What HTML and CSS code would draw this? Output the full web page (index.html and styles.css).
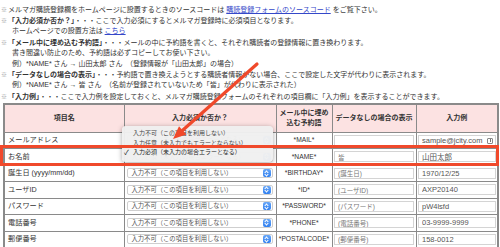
FILE: index.html
```html
<!DOCTYPE html>
<html lang="ja">
<head>
    <meta charset="UTF-8">
    <title>入力項目の設定</title>
    <link rel="stylesheet" href="styles.css">
</head>
<body>
    <div class="notes">
        <p class="note"><span class="mark">※</span>メルマガ購読登録欄をホームページに設置するときのソースコードは <a href="#">購読登録フォームのソースコード</a> をご覧下さい。</p>
        <p class="note"><span class="mark">※</span><b>「入力必須か否か？」</b>・・・ここで入力必須にするとメルマガ登録時に必須項目となります。</p>
        <p class="sub">ホームページでの設置方法は <a href="#">こちら</a></p>
        <p class="note"><span class="mark">※</span><b>「メール中に埋め込む予約語」</b>・・・メールの中に予約語を書くと、それぞれ購読者の登録情報に置き換わります。</p>
        <p class="sub">書き間違い防止のため、予約語は必ずコピーしてお使い下さい。</p>
        <p class="sub">例）*NAME* さん → 山田太郎 さん　（登録情報が「山田太郎」の場合）</p>
        <p class="note"><span class="mark">※</span><b>「データなしの場合の表示」</b>・・・予約語で置き換えようとする購読者情報がない場合、ここで設定した文字が代わりに表示されます。</p>
        <p class="sub">例）*NAME* さん → 皆 さん　（名前が登録されていないため「皆」が代わりに表示された）</p>
        <p class="note"><span class="mark">※</span><b>「入力例」</b>・・・ここで入力例を設定しておくと、メルマガ購読登録フォームのそれぞれの項目欄に「入力例」を表示することができます。</p>
    </div>

    <table class="fields">
        <colgroup>
            <col class="c-name">
            <col class="c-req">
            <col class="c-tag">
            <col class="c-empty">
            <col class="c-sample">
        </colgroup>
        <tr>
            <th>項目名</th>
            <th>入力必須か否か？</th>
            <th>メール中に埋め込む予約語</th>
            <th>データなしの場合の表示</th>
            <th>入力例</th>
        </tr>
        <tr>
            <td class="label">メールアドレス</td>
            <td><div class="select"><span>入力必須（未入力の場合エラーとなる）</span><span class="stepper"></span></div></td>
            <td class="tag">*MAIL*</td>
            <td><input class="empty" type="text" value=""></td>
            <td class="has-key"><input class="sample" type="text" value="sample@jcity.com"><span class="key"></span></td>
        </tr>
        <tr>
            <td class="label">お名前</td>
            <td><div class="select"><span>入力必須（未入力の場合エラーとなる）</span><span class="stepper"></span></div></td>
            <td class="tag">*NAME*</td>
            <td><input class="empty" type="text" value="皆"></td>
            <td><input class="sample" type="text" value="山田太郎"></td>
        </tr>
        <tr>
            <td class="label">誕生日 (yyyy/mm/dd)</td>
            <td><div class="select"><span>入力不可（この項目を利用しない）</span><span class="stepper"></span></div></td>
            <td class="tag">*BIRTHDAY*</td>
            <td><input class="empty" type="text" value="(誕生日)"></td>
            <td><input class="sample" type="text" value="1970/12/25"></td>
        </tr>
        <tr>
            <td class="label">ユーザID</td>
            <td><div class="select"><span>入力不可（この項目を利用しない）</span><span class="stepper"></span></div></td>
            <td class="tag">*ID*</td>
            <td><input class="empty" type="text" value="(ユーザID)"></td>
            <td><input class="sample" type="text" value="AXP20140"></td>
        </tr>
        <tr>
            <td class="label">パスワード</td>
            <td><div class="select"><span>入力不可（この項目を利用しない）</span><span class="stepper"></span></div></td>
            <td class="tag">*PASSWORD*</td>
            <td><input class="empty" type="text" value="(パスワード)"></td>
            <td><input class="sample" type="text" value="pW4lsfd"></td>
        </tr>
        <tr>
            <td class="label">電話番号</td>
            <td><div class="select"><span>入力不可（この項目を利用しない）</span><span class="stepper"></span></div></td>
            <td class="tag">*PHONE*</td>
            <td><input class="empty" type="text" value="(電話番号)"></td>
            <td><input class="sample" type="text" value="03-9999-9999"></td>
        </tr>
        <tr>
            <td class="label">郵便番号</td>
            <td><div class="select"><span>入力不可（この項目を利用しない）</span><span class="stepper"></span></div></td>
            <td class="tag">*POSTALCODE*</td>
            <td><input class="empty" type="text" value="(郵便番号)"></td>
            <td><input class="sample" type="text" value="158-0012"></td>
        </tr>
    </table>

    <!-- open popup of the select -->
    <ul class="menu">
        <li>入力不可（この項目を利用しない）</li>
        <li>入力任意（未入力でもエラーとならない）</li>
        <li class="checked">入力必須（未入力の場合エラーとなる）</li>
    </ul>

    <div class="highlight"></div>

    <svg class="arrow" width="500" height="247" viewBox="0 0 500 247">
        <line x1="257" y1="64" x2="182.7" y2="130.3" stroke="#f0492b" stroke-width="3.2" stroke-linecap="round"/>
        <polygon points="173,139 186.4,134.4 179,126.2" fill="#f0492b"/>
    </svg>
</body>
</html>
```

FILE: styles.css
```css
* {
    margin: 0;
    padding: 0;
    box-sizing: border-box;
}

body {
    font-family: "Liberation Sans", "Noto Sans CJK JP", sans-serif;
    font-size: 7px;
    line-height: 10.4px;
    color: #333;
    background-color: #fff;
    padding: 4.5px 2px 0 1px;
    width: 500px;
    height: 247px;
    overflow: hidden;
}

a {
    color: #3548c9;
}

.note {
    margin-top: 1px;
}

.note:first-child {
    margin-top: 0;
}

.mark {
    color: #999;
    font-size: 6px;
    margin-right: 1px;
}

.sub {
    padding-left: 11px;
}

/* table */
.fields {
    margin: 1px 0 0 2px;
    width: 494px;
    table-layout: fixed;
    border-collapse: collapse;
    border: 2px solid #8a8a8a;
}

.c-name { width: 120px; }
.c-req { width: 152px; }
.c-tag { width: 56px; }
.c-empty { width: 84px; }
.c-sample { width: 82px; }

.fields th,
.fields td {
    border: 1px solid #8a8a8a;
}

.fields th {
    background-color: #fce2e2;
    font-size: 7px;
    line-height: 10.3px;
    height: 28px;
    padding: 0 3px;
    font-weight: bold;
    color: #333;
}

.fields td {
    height: 16.5px;
    padding: 0;
    vertical-align: middle;
}

.fields td.label {
    padding-left: 3px;
    font-size: 7.2px;
    color: #333;
}

.fields td.tag {
    text-align: center;
    font-size: 6.7px;
    color: #333;
}

.select {
    display: flex;
    align-items: center;
    justify-content: space-between;
    height: 10px;
    margin: 0 3px 0 2px;
    padding: 0 1px 0 4px;
    border: 1px solid #cfcfcf;
    border-radius: 2px;
    background-color: #fff;
    font-size: 6.3px;
    color: #555;
    white-space: nowrap;
}

.stepper {
    position: relative;
    width: 8px;
    height: 8px;
    border-radius: 2px;
    background: linear-gradient(#6aa8f7, #2f7ff0);
}

.stepper::before,
.stepper::after {
    content: "";
    position: absolute;
    left: 2.5px;
    width: 2px;
    height: 2px;
    border-left: 1px solid #fff;
    border-top: 1px solid #fff;
}

.stepper::before {
    top: 1.5px;
    transform: rotate(45deg);
}

.stepper::after {
    bottom: 1.5px;
    transform: rotate(225deg);
}

.fields input {
    display: block;
    width: calc(100% - 3px);
    height: 11px;
    margin-left: 1.5px;
    padding: 0 3px;
    border: 1px solid #d4d4d4;
    font-family: "Liberation Sans", "Noto Sans CJK JP", sans-serif;
    outline: none;
}

.fields input.empty {
    font-size: 6.5px;
    color: #777;
}

.fields input.sample {
    font-size: 7.5px;
    color: #555;
}

.has-key {
    position: relative;
}

.key {
    position: absolute;
    right: 4px;
    top: 5px;
    width: 6px;
    height: 6px;
    border: 1px solid #888;
    border-radius: 1px;
}

.key::after {
    content: "";
    position: absolute;
    left: 1.5px;
    top: 0.5px;
    width: 1px;
    height: 2.5px;
    background-color: #777;
}

/* popup menu of the select */
.menu {
    position: absolute;
    left: 122px;
    top: 126px;
    width: 151px;
    height: 36px;
    padding-top: 3px;
    list-style: none;
    background-color: rgba(240, 240, 240, 0.97);
    border-radius: 4px;
    box-shadow: 0 1px 5px rgba(0, 0, 0, 0.35);
    font-size: 6px;
    line-height: 9.6px;
    color: #444;
    white-space: nowrap;
}

.menu li {
    padding-left: 11px;
    position: relative;
}

.menu li.checked {
    color: #222;
}

.menu li.checked::before {
    content: "✓";
    position: absolute;
    left: 2px;
    font-size: 7px;
    color: #222;
}

.highlight {
    position: absolute;
    left: 0;
    top: 145px;
    width: 499px;
    height: 21px;
    border: 3.5px solid #f0492b;
}

.arrow {
    position: absolute;
    left: 0;
    top: 0;
}
```
